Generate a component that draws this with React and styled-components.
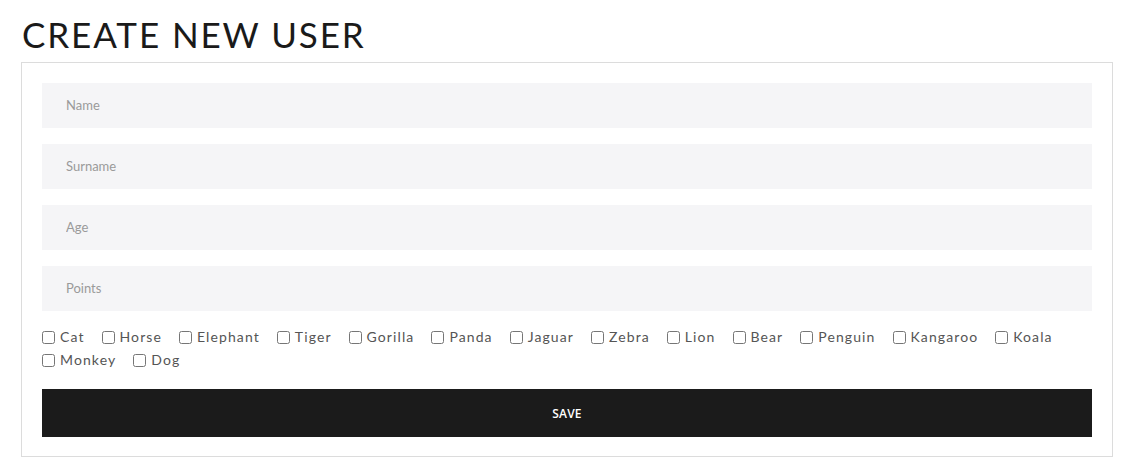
import React from 'react'
import styled, { createGlobalStyle } from 'styled-components'

const GlobalStyle = createGlobalStyle`
  body {
    margin: 0;
    background: #fff;
    font-family: "Lato", "Open Sans", sans-serif;
  }
`

const Page = styled.div`
  padding: 14px 21px 0 21px;
  width: 1092px;
`

const Title = styled.h1`
  margin: 0 0 8px 1px;
  font-family: "Lato", sans-serif;
  font-weight: 400;
  font-size: 35px;
  line-height: 40px;
  letter-spacing: 1.9px;
  color: #1a1a1a;
`

const Card = styled.form`
  border: 1px solid #dcdcdc;
  padding: 20px 20px 19px 20px;
  display: flex;
  flex-direction: column;
  gap: 16px;
`

const Input = styled.input`
  height: 45px;
  box-sizing: border-box;
  border: none;
  outline: none;
  background: #f5f5f7;
  padding: 0 24px 1px;
  font-family: "Lato", sans-serif;
  font-size: 13px;
  color: #333;
  &::placeholder {
    color: #9a9a9a;
  }
`

const Choices = styled.div`
  display: flex;
  flex-wrap: wrap;
  row-gap: 3px;
  margin-top: 0;
  margin-bottom: 3px;
`

const Choice = styled.label`
  display: flex;
  align-items: center;
  margin-right: 17px;
  font-size: 14px;
  line-height: 20px;
  letter-spacing: 1.1px;
  color: #555;
  input {
    width: 13px;
    height: 13px;
    margin: 0 5px 0 0;
  }
`

const SaveButton = styled.button`
  height: 48px;
  border: none;
  background: #1b1b1b;
  color: #fff;
  font-family: "Open Sans", sans-serif;
  font-weight: 600;
  font-size: 12px;
  letter-spacing: 0.2px;
  cursor: pointer;
`

const animals = ['Cat', 'Horse', 'Elephant', 'Tiger', 'Gorilla', 'Panda', 'Jaguar', 'Zebra', 'Lion', 'Bear', 'Penguin', 'Kangaroo', 'Koala', 'Monkey', 'Dog']

export default function App() {
  return (
    <Page>
      <GlobalStyle />
      <Title>CREATE NEW USER</Title>
      <Card onSubmit={e => e.preventDefault()}>
        <Input placeholder="Name" />
        <Input placeholder="Surname" />
        <Input placeholder="Age" />
        <Input placeholder="Points" />
        <Choices>
          {animals.map(a => (
            <Choice key={a}>
              <input type="checkbox" />
              {a}
            </Choice>
          ))}
        </Choices>
        <SaveButton type="submit">SAVE</SaveButton>
      </Card>
    </Page>
  )
}
